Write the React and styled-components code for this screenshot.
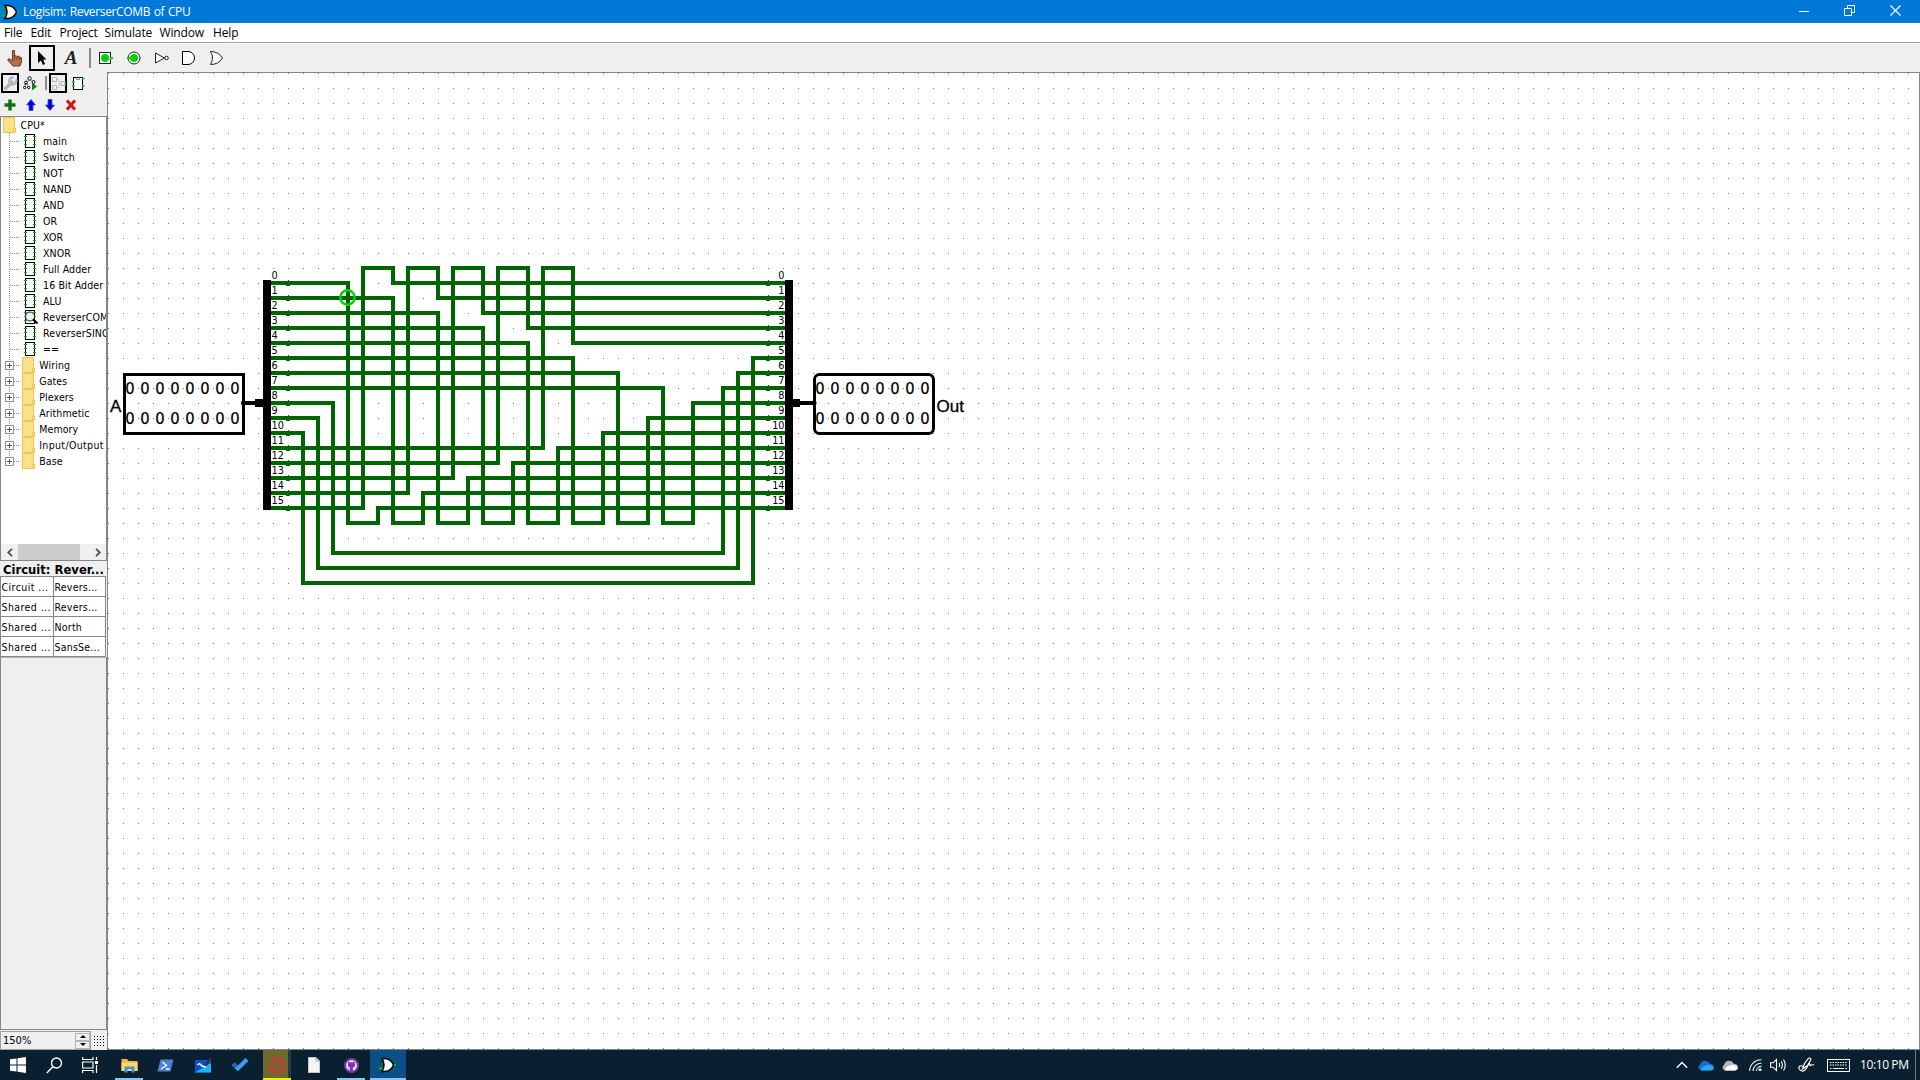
import React from "react";
import styled, { createGlobalStyle } from "styled-components";

const TAHOMA = `"DejaVu Sans Condensed", "DejaVu Sans", sans-serif`;
const SEGOE = `"Open Sans", "Noto Sans", sans-serif`;

const Global = createGlobalStyle`
  * { box-sizing: border-box; }
  html, body { margin: 0; padding: 0; overflow: hidden; }
  svg { display: block; flex: none; }
`;

const Screen = styled.div`
  width: 1920px;
  height: 1080px;
  display: flex;
  flex-direction: column;
  background: #efefef;
  font: 10.5px/16px ${TAHOMA};
  color: #000;
  overflow: hidden;
`;

/* ---------- title and menu ---------- */
const TitleBar = styled.header`
  height: 23px;
  flex: none;
  display: flex;
  align-items: center;
  background: #0078d7;
  color: #fff;
  padding-left: 2px;
  font: 12px/23px ${SEGOE};
`;
const Title = styled.span`
  margin-left: 3px;
  flex: 1;
  letter-spacing: -0.36px;
  word-spacing: 0.9px;
`;
const WindowButtons = styled.div`
  display: flex;
  align-items: center;
  gap: 35px;
  padding: 0 19px 2px 0;
`;
const MenuBar = styled.nav`
  height: 20px;
  flex: none;
  display: flex;
  background: #fff;
  border-bottom: 1px solid #a0a0a0;
  padding-left: 4px;
  font: 12px/20px ${SEGOE};
`;
const MenuItem = styled.span`
  width: ${(p) => p.$w}px;
  letter-spacing: -0.15px;
  white-space: nowrap;
`;
const ToolBar = styled.div`
  height: 29px;
  flex: none;
  display: flex;
  align-items: center;
  border-top: 1px solid #fff;
  padding-left: 1px;
`;
const Tool = styled.div`
  width: ${(p) => p.$w || 28}px;
  height: ${(p) => p.$h || 26}px;
  flex: none;
  display: flex;
  align-items: center;
  justify-content: center;
  border: ${(p) => (p.$on ? "2px solid #000" : "none")};
`;
const Separator = styled.i`
  width: 2px;
  height: ${(p) => p.$h}px;
  background: #8c8c8c;
  margin: 0 ${(p) => p.$r}px 0 ${(p) => p.$l}px;
`;
const TextTool = styled.span`
  font: italic bold 19px/22px "Liberation Serif", serif;
  color: #202020;
`;

/* ---------- body ---------- */
const Body = styled.main`
  height: 978px;
  flex: none;
  display: flex;
`;
const Side = styled.aside`
  width: 107px;
  flex: none;
  display: flex;
  flex-direction: column;
`;
const SideTools = styled.div`
  height: ${(p) => p.$h}px;
  flex: none;
  display: flex;
  align-items: center;
  padding-left: ${(p) => p.$pl}px;
  gap: ${(p) => p.$gap || 0}px;
`;
const TreeBox = styled.div`
  height: 445px;
  flex: none;
  display: flex;
  flex-direction: column;
  background: #fff;
  border: 1px solid #82878f;
  overflow: hidden;
`;
const TreeRows = styled.div`
  flex: 1;
  min-height: 0;
  overflow: hidden;
`;
const TreeRow = styled.div`
  height: 16px;
  display: flex;
  white-space: nowrap;
  padding-left: ${(p) => p.$pl || 0}px;
`;
const RowLabel = styled.span`
  margin-left: ${(p) => p.$ml}px;
  line-height: 17px;
  letter-spacing: ${(p) => p.$ls || 0.12}px;
`;
const ScrollBar = styled.div`
  height: 16px;
  flex: none;
  display: flex;
  align-items: center;
  background: #f0f0f0;
`;
const Thumb = styled.i`
  width: 62px;
  height: 16px;
  margin-right: 9px;
  background: #cdcdcd;
`;
const Arrow = styled.i`
  width: 17px;
  display: flex;
  justify-content: center;
`;
const AttrTitle = styled.div`
  height: 15px;
  flex: none;
  padding-left: 3px;
  font: bold 12.9px/17px ${TAHOMA};
  white-space: nowrap;
`;
const AttrTable = styled.div`
  width: 106px;
  flex: none;
  display: grid;
  grid-template-columns: 52px 51px;
  gap: 1px;
  padding: 1px;
  background: #82878f;
`;
const Cell = styled.span`
  height: 19px;
  line-height: 20px;
  padding-left: 0.5px;
  background: #fff;
  white-space: nowrap;
  letter-spacing: ${(p) => p.$ls}px;
`;
const Filler = styled.div`
  flex: 1;
  border: 1px solid #82878f;
  border-top-color: #b8b8b8;
`;
const ZoomRow = styled.div`
  height: 20px;
  flex: none;
  display: flex;
  align-items: center;
  padding-top: 1px;
`;
const ZoomField = styled.div`
  width: 91px;
  height: 19px;
  display: flex;
  align-items: center;
  justify-content: space-between;
  border: 1px solid #a0a0a0;
  padding-left: 2px;
  font-size: 11px;
`;
const Spinner = styled.div`
  display: flex;
  flex-direction: column;
`;
const SpinButton = styled.i`
  width: 15px;
  height: 8px;
  display: flex;
  align-items: center;
  justify-content: center;
  border: 1px solid #b4b4b4;
  background: #f0f0f0;
`;
const GridToggle = styled.div`
  padding-left: 3px;
`;
const Canvas = styled.section`
  width: 1813px;
  height: 978px;
  border: 1px solid #82878f;
  background: #fff;
`;

/* ---------- taskbar ---------- */
const TaskBar = styled.footer`
  height: 30px;
  flex: none;
  display: flex;
  background: #0a2031;
  color: #fff;
`;
const TaskGroup = styled.div`
  display: flex;
  padding-left: ${(p) => p.$pl || 0}px;
`;
const Task = styled.div`
  width: ${(p) => p.$w}px;
  height: 30px;
  display: flex;
  align-items: center;
  justify-content: center;
  background: ${(p) => p.$bg || "transparent"};
  box-shadow: ${(p) => (p.$line ? `inset 0 -2px ${p.$line}` : "none")};
  margin: 0 ${(p) => p.$m || 0}px;
`;
const Tray = styled.div`
  margin-left: auto;
  display: flex;
  align-items: center;
  padding-right: 4px;
`;
const TraySlot = styled.div`
  width: ${(p) => p.$w}px;
  display: flex;
  justify-content: center;
`;
const Clock = styled.span`
  font: 12px/30px ${SEGOE};
  letter-spacing: -0.4px;
  width: 55px;
  margin-left: 7px;
  white-space: nowrap;
`;
const DesktopEdge = styled.i`
  width: 1px;
  height: 30px;
  background: #6c7984;
`;

/* ---------- icons ---------- */
const GateIcon = ({ dark }) => (
  <svg width="18" height="16" viewBox="0 0 18 16">
    <path d="M0 4.5H4M0 11.5H4" stroke={dark ? "#00b000" : "#005c1c"} strokeWidth="2" />
    <path d="M0 11.5H4M14 8H17" stroke="#00c800" strokeWidth="2" />
    <path d="M3 1.5H6Q12 2 14.5 8Q12 14 6 14.5H3Q7 8 3 1.5Z" fill="#fff" stroke="#000" strokeWidth="1.5" />
  </svg>
);

const HandIcon = () => (
  <svg width="16" height="17" viewBox="0 0 16 17">
    <path d="M5.500 .5H7.500V6.500L9 5.500L10 6.500L12 6L12.500 7.500L14.500 7.500V12L13 16H6L1 10.500V9H3L5.500 11Z" fill="#b5704f" stroke="#5d2f1e" strokeWidth=".9" />
    <path d="M7.500 7V10M10 7V10M12.500 8V10" stroke="#5d2f1e" strokeWidth=".7" />
  </svg>
);
const ArrowIcon = () => (
  <svg width="10" height="16" viewBox="0 0 10 16">
    <path d="M1 1V13L4 10.5L6 15L8 14L6.200 9.500H9.500Z" fill="#000" />
  </svg>
);
const PinIcon = ({ round }) => (
  <svg width="16" height="14" viewBox="0 0 16 14">
    {round ? <circle cx="8" cy="7" r="6" fill="#fff" stroke="#222" /> : <rect x="1.500" y="1.500" width="11" height="11" fill="#fff" stroke="#222" />}
    <circle cx={round ? 8 : 7} cy="7" r="4" fill="#00d200" />
    <rect x={round ? 1 : 12} y="6" width="3" height="2" fill="#00d200" />
  </svg>
);
const NotIcon = () => (
  <svg width="16" height="14" viewBox="0 0 16 14" fill="#fff" stroke="#222">
    <path d="M1.500 2L10.500 7L1.500 12Z" />
    <circle cx="12.500" cy="7" r="1.800" />
  </svg>
);
const AndIcon = () => (
  <svg width="15" height="14" viewBox="0 0 15 14" fill="#fff" stroke="#000">
    <path d="M1.500 .5H7A6.500 6.500 0 0 1 7 13.500H1.500Z" />
  </svg>
);
const OrIcon = () => (
  <svg width="15" height="14" viewBox="0 0 15 14" fill="#fff" stroke="#222">
    <path d="M1.500 .5Q9.500 .5 13.500 7Q9.500 13.500 1.500 13.500Q5.500 7 1.500 .5Z" />
  </svg>
);
const WrenchIcon = () => (
  <svg width="15" height="15" viewBox="0 0 15 15">
    <path d="M2.500 12.500L9 6" stroke="#b4b4b4" strokeWidth="3.500" strokeLinecap="round" />
    <path d="M13 3.500A3.500 3.500 0 1 1 10.500 1.500" fill="none" stroke="#b4b4b4" strokeWidth="2.500" />
  </svg>
);
const SimIcon = () => (
  <svg width="15" height="15" viewBox="0 0 15 15" fill="#fff" stroke="#000">
    <path d="M6.500 3L2.500 7L1.500 12M6.500 3L10.500 6.500M3.500 7L5.500 12" strokeDasharray="2 1" />
    <circle cx="6.500" cy="2.500" r="1.700" />
    <circle cx="3" cy="6.500" r="1.400" />
    <circle cx="1.700" cy="11.500" r="1.200" />
    <circle cx="5.700" cy="11.500" r="1.200" />
    <circle cx="10.500" cy="6" r="1.500" />
    <path d="M9 6.500V14.500L14 10.500Z" fill="#107c20" stroke="none" />
  </svg>
);
const LayoutIcon = () => (
  <svg width="15" height="15" viewBox="0 0 15 15" fill="none" stroke="#b8b8b8">
    <path d="M5 3.500H8V7.500H10M5 11.500H8V7.500" stroke="#a9dca9" />
    <rect x="1.500" y="1.500" width="4" height="4" />
    <rect x="1.500" y="9.500" width="4" height="4" />
    <rect x="10" y="5.500" width="4" height="4" />
  </svg>
);
const ChipIcon = () => (
  <svg width="13" height="15" viewBox="0 0 13 15">
    <rect x="1.500" y="1.500" width="9" height="12" fill="#fff" stroke="#000" />
    <path d="M4.500 1.500V3.500H7.500V1.500" fill="none" stroke="#888" />
    <path d="M0 6H2.500M10 2.500H12.500M10 10H12.500M0 10H2.500" stroke="#00c800" strokeWidth="1.600" />
  </svg>
);
const PlusIcon = () => (
  <svg width="12" height="12" viewBox="0 0 12 12"><path d="M6 .5V11.500M.5 6H11.500" stroke="#107010" strokeWidth="3.400" /></svg>
);
const MoveIcon = ({ down }) => (
  <svg width="10" height="12" viewBox="0 0 10 12">
    <path d={down ? "M3 .5H7V6H9.500L5 11.500L.5 6H3Z" : "M3 11.500H7V6H9.500L5 .5L.5 6H3Z"} fill="#0000e0" stroke="#4a4ab8" strokeWidth=".8" />
  </svg>
);
const DeleteIcon = () => (
  <svg width="12" height="12" viewBox="0 0 12 12"><path d="M2 1.500L10 10.500M10 1.500L2 10.500" stroke="#d81010" strokeWidth="3" /></svg>
);

const Folder = () => (
  <svg width="13" height="16" viewBox="0 0 13 16">
    <path d="M.5 .5H11.500V11H12.500V15.500H.5Z" fill="#ffe08a" stroke="#ecc64e" />
    <path d="M10.500 15V11.500H12.500" fill="none" stroke="#ecc64e" />
  </svg>
);
const Branch = ({ kind, last }) => (
  <svg width={kind === "lib" ? 21 : 23} height="16" viewBox={`0 0 ${kind === "lib" ? 21 : 23} 16`} shapeRendering="crispEdges">
    <path d={`M8.500 0V${last ? 8 : 16}M9 8.500H19`} stroke="#8a8a8a" strokeDasharray="1 1" />
    {kind === "lib" && (
      <g>
        <rect x="4.500" y="4.500" width="8" height="8" fill="#fff" stroke="#919191" />
        <path d="M6 8.500H11M8.500 6V11" stroke="#3a55a0" />
      </g>
    )}
  </svg>
);
const CircuitIcon = ({ viewed }) => (
  <svg width="15" height="16" viewBox="0 0 15 16" shapeRendering="crispEdges">
    <rect x="1.500" y="1.500" width="9" height="13" fill="#fff" stroke="#000" />
    <path d="M0 3.500H3M0 7.500H3M0 11.500H3M9 3.500H12M9 7.500H12M9 11.500H12" stroke="#00b400" />
    {viewed && (
      <g shapeRendering="auto">
        <circle cx="6" cy="7.500" r="4.500" fill="#eef2ff" stroke="#222" />
        <path d="M9 10.500L13.500 14.500" stroke="#000" strokeWidth="2.200" />
      </g>
    )}
  </svg>
);
const ScrollChevron = ({ right }) => (
  <svg width="6" height="9">
    <path d={right ? "M1 .8L4.800 4.500L1 8.200" : "M5 .8L1.200 4.500L5 8.200"} fill="none" stroke="#505050" strokeWidth="1.800" />
  </svg>
);

/* ---------- circuit ---------- */
const pinY = (k) => 283 + 15 * k;
const rows = Array.from({ length: 16 }, (_, k) => k);
const wires = [];
for (let k = 0; k < 16; k++) {
  const out = 15 - k;
  let a, turn, b;
  if (k < 8) {
    a = 348 + 45 * k; turn = 523; b = a + 30;
  } else if (k < 11) {
    a = 333 - 15 * (k - 8); turn = 553 + 15 * (k - 8); b = 723 + 15 * (k - 8);
  } else {
    a = 543 - 45 * (k - 11); turn = 268; b = a + 30;
  }
  wires.push(`M271 ${pinY(k)}H${a}V${turn}H${b}V${pinY(out)}H785`);
}

const PinNumber = styled.text`
  font: 10.8px ${TAHOMA};
  text-anchor: ${(p) => p.$anchor};
`;
const BitText = styled.text`
  font: 16.4px ${TAHOMA};
  text-anchor: middle;
  stroke: #000;
  stroke-width: 0.25px;
`;
const PinLabel = styled.text`
  font: 17px "Liberation Sans", Arial, sans-serif;
  stroke: #000;
  stroke-width: 0.3px;
`;

const Bits = ({ x }) =>
  [394, 424].map((y) =>
    rows.slice(0, 8).map((i) => <BitText key={`${y}-${i}`} x={x + 15 * i} y={y}>0</BitText>)
  );

const Circuit = () => (
  <svg width="1811" height="976" viewBox="108 73 1811 976">
    <defs>
      <pattern id="dots" x="3" y="13" width="15" height="15" patternUnits="userSpaceOnUse">
        <rect width="1" height="1" fill="#777" />
      </pattern>
    </defs>
    <rect x="108" y="73" width="1811" height="976" fill="url(#dots)" />
    <g shapeRendering="crispEdges">
      <path d={wires.join("")} fill="none" stroke="#006400" strokeWidth="4" />
      {rows.map((k) => (
        <g key={k} fill="#006400">
          <rect x="288" y={pinY(k) - 3} width="1" height="1" />
          <rect x="286" y={pinY(k) + 2} width="4" height="1" />
          <rect x="768" y={pinY(k) - 3} width="1" height="1" />
          <rect x="766" y={pinY(k) + 2} width="4" height="1" />
        </g>
      ))}
      <path d="M263 280H271V510H263ZM785 280H793V510H785ZM255 399H263V407H255ZM793 399H800V407H793ZM243 401H255V405H243ZM800 401H814V405H800Z" />
      <rect x="124.500" y="374.500" width="119" height="59" fill="none" stroke="#000" strokeWidth="3" />
    </g>
    <circle cx="243.500" cy="403" r="2.500" />
    <circle cx="814" cy="403" r="2.500" />
    <rect x="814.500" y="374.500" width="119" height="59" rx="5" fill="none" stroke="#000" strokeWidth="3" />
    <circle cx="347.500" cy="297.500" r="7.200" fill="none" stroke="#00d200" strokeWidth="2.400" />
    {rows.map((k) => (
      <g key={k}>
        <PinNumber x="271.500" y={pinY(k) - 4} $anchor="start">{k}</PinNumber>
        <PinNumber x="784.500" y={pinY(k) - 4} $anchor="end">{k}</PinNumber>
      </g>
    ))}
    <Bits x={130} />
    <Bits x={820} />
    <PinLabel x="110" y="412">A</PinLabel>
    <PinLabel x="936.500" y="412">Out</PinLabel>
  </svg>
);

const circuits = ["main", "Switch", "NOT", "NAND", "AND", "OR", "XOR", "XNOR", "Full Adder", "16 Bit Adder", "ALU", "ReverserCOMB", "ReverserSING", "=="];
const libs = ["Wiring", "Gates", "Plexers", "Arithmetic", "Memory", "Input/Output", "Base"];
const attrs = ["Circuit ...", "Revers...", "Shared ...", "Revers...", "Shared ...", "North", "Shared ...", "SansSe..."];

export default function App() {
  return (
    <>
      <Global />
      <Screen>
        <TitleBar>
          <GateIcon dark />
          <Title>Logisim: ReverserCOMB of CPU</Title>
          <WindowButtons>
            <svg width="10" height="11"><path d="M0 6.500H10" stroke="#fff" /></svg>
            <svg width="11" height="11" fill="none" stroke="#fff"><path d="M.5 3.500H7.500V10.500H.5ZM3.500 3.500V.5H10.500V7.500H7.500" /></svg>
            <svg width="11" height="11"><path d="M.5 .5L10.500 10.500M10.500 .5L.5 10.500" stroke="#fff" strokeWidth="1.200" /></svg>
          </WindowButtons>
        </TitleBar>
        <MenuBar>
          <MenuItem $w={26.500}>File</MenuItem>
          <MenuItem $w={29}>Edit</MenuItem>
          <MenuItem $w={45}>Project</MenuItem>
          <MenuItem $w={55}>Simulate</MenuItem>
          <MenuItem $w={53.500}>Window</MenuItem>
          <MenuItem $w={30}>Help</MenuItem>
        </MenuBar>
        <ToolBar>
          <Tool $w={28}><HandIcon /></Tool>
          <Tool $on $w={26}><ArrowIcon /></Tool>
          <Tool $w={32}><TextTool>A</TextTool></Tool>
          <Separator $h={20} $l={2} $r={1} />
          <Tool><PinIcon /></Tool>
          <Tool><PinIcon round /></Tool>
          <Tool $w={28}><NotIcon /></Tool>
          <Tool $w={25}><AndIcon /></Tool>
          <Tool $w={30}><OrIcon /></Tool>
        </ToolBar>
        <Body>
          <Side>
            <SideTools $h={22} $pl={1}>
              <Tool $on $w={18} $h={20}><WrenchIcon /></Tool>
              <Tool $w={22} $h={20}><SimIcon /></Tool>
              <Separator $h={14} $l={4} $r={2} />
              <Tool $on $w={18} $h={20}><LayoutIcon /></Tool>
              <Tool $w={22} $h={20}><ChipIcon /></Tool>
            </SideTools>
            <SideTools $h={22} $pl={4} $gap={9.500}>
              <PlusIcon /><MoveIcon /><MoveIcon down /><DeleteIcon />
            </SideTools>
            <TreeBox>
              <TreeRows>
                <TreeRow $pl={2}><Folder /><RowLabel $ml={4.500}>CPU*</RowLabel></TreeRow>
                {circuits.map((name) => (
                  <TreeRow key={name}>
                    <Branch />
                    <CircuitIcon viewed={name === "ReverserCOMB"} />
                    <RowLabel $ml={4}>{name}</RowLabel>
                  </TreeRow>
                ))}
                {libs.map((name) => (
                  <TreeRow key={name}>
                    <Branch kind="lib" last={name === "Base"} />
                    <Folder />
                    <RowLabel $ml={4.200} $ls={name.includes("/") ? 0.35 : 0}>{name}</RowLabel>
                  </TreeRow>
                ))}
              </TreeRows>
              <ScrollBar>
                <Arrow><ScrollChevron /></Arrow>
                <Thumb />
                <Arrow><ScrollChevron right /></Arrow>
              </ScrollBar>
            </TreeBox>
            <AttrTitle>Circuit: Rever...</AttrTitle>
            <AttrTable>
              {attrs.map((t, i) => <Cell key={i} $ls={i % 2 ? 0.22 : 0.42}>{t}</Cell>)}
            </AttrTable>
            <Filler />
            <ZoomRow>
              <ZoomField>
                150%
                <Spinner>
                  <SpinButton><svg width="6" height="3"><path d="M0 3L3 0L6 3Z" /></svg></SpinButton>
                  <SpinButton><svg width="6" height="3"><path d="M0 0L3 3L6 0Z" /></svg></SpinButton>
                </Spinner>
              </ZoomField>
              <GridToggle>
                <svg width="12" height="12" shapeRendering="crispEdges">
                  {[0, 1, 2, 3].map((r) => [0, 1, 2, 3].map((c) => <rect key={`${r}${c}`} x={c * 3} y={r * 3 + 1} width="1" height="1" />))}
                </svg>
              </GridToggle>
            </ZoomRow>
          </Side>
          <Canvas><Circuit /></Canvas>
        </Body>
        <TaskBar>
          <TaskGroup>
            <Task $w={36}><svg width="16" height="16" fill="#fff"><path d="M0 2.300L6.500 1.400V7.500H0ZM7.500 1.200L16 0V7.500H7.500ZM0 8.500H6.500V14.600L0 13.700ZM7.500 8.500H16V16L7.500 14.800Z" /></svg></Task>
            <Task $w={36}><svg width="17" height="17" fill="none" stroke="#fff" strokeWidth="1.400"><circle cx="10.500" cy="6" r="5" /><path d="M7 9.700L.8 16" /></svg></Task>
            <Task $w={36}><svg width="17" height="16" fill="none" stroke="#fff" strokeWidth="1.200"><path d="M.6 0V2.500H11V0M.6 16V13.500H11V16M.6 5H11V11H.6ZM14.500 0V3M14.500 8V16" /><path d="M13 5.500H16" strokeWidth="3" /></svg></Task>
          </TaskGroup>
          <TaskGroup $pl={3}>
            <Task $w={28} $m={4} $line="#8cc4ec">
              <svg width="17" height="15"><path d="M.5 1H6L7.500 3H16.500V13H.5Z" fill="#f5b83d" /><path d="M.5 4.500H16.500V13H.5Z" fill="#ffd76e" /><path d="M3.500 14.500V8.500H13.500V14.500H10.500V11H6.500V14.500Z" fill="#3c92d6" /></svg>
            </Task>
            <Task $w={37}>
              <svg width="17" height="13"><path d="M3.500 .5H16.500L13.500 12.500H.5Z" fill="#4a7fd6" /><path d="M5.500 3L9.500 6.500L4 10M9 10H12.500" fill="none" stroke="#fff" strokeWidth="1.400" /></svg>
            </Task>
            <Task $w={38}>
              <svg width="17" height="15"><rect y="2" width="16" height="12.500" fill="#0b4fd8" /><path d="M0 14.500L16 5V14.500Z" fill="#18b4f4" /><path d="M2.500 7Q4.500 4.500 6 7T11 8.500" fill="none" stroke="#fff" strokeWidth="1.500" /><path d="M10.500 7.500L15.500 .5" stroke="#333" strokeWidth="2.200" /></svg>
            </Task>
            <Task $w={36}>
              <svg width="17" height="14"><path d="M1 5.500L6.500 11" stroke="#2264b8" strokeWidth="4.500" /><path d="M4.500 11.800L15 1.500" stroke="#3f9bec" strokeWidth="4.200" /></svg>
            </Task>
            <Task $w={28} $m={5} $bg="linear-gradient(90deg, #6b6b2c 25px, #243b48 25px)" $line="#ffee00">
              <svg width="17" height="17" fill="none" stroke="#d8303c" strokeWidth="1.500"><circle cx="8.500" cy="8.500" r="7.500" /><ellipse cx="8.500" cy="8.500" rx="3.500" ry="6.500" /></svg>
            </Task>
            <Task $w={36}>
              <svg width="12" height="16"><path d="M.5 .5H8L11.500 4V15.500H.5Z" fill="#f4f4f0" stroke="#c8c8c8" /><path d="M8 .5V4H11.500" fill="none" stroke="#aaa" /></svg>
            </Task>
            <Task $w={28} $m={5} $line="#8cc4ec">
              <svg width="15" height="15"><circle cx="7.500" cy="7.500" r="7.500" fill="#7a35a8" /><circle cx="7.500" cy="7.500" r="5.400" fill="#f0e4f8" /><path d="M4.500 3.500L6 4.300H9L10.500 3.500L10.900 5.200Q11.800 9 8.900 9.500V13.500H6.100V11.500Q4.500 12 3.800 10.200Q5 11 6.100 10.400V9.500Q3.200 9 4.100 5.200Z" fill="#7a35a8" /></svg>
            </Task>
            <Task $w={36} $bg="#0a4f87" $line="#8cc4ec"><GateIcon /></Task>
          </TaskGroup>
          <Tray>
            <TraySlot $w={26}><svg width="12" height="8"><path d="M.8 6.800L6 1.500L11.200 6.800" fill="none" stroke="#fff" strokeWidth="1.300" /></svg></TraySlot>
            <TraySlot $w={22}><svg width="16" height="11"><path d="M3 10.500A3 3 0 0 1 2 5Q3 1 7 .8Q10 .5 12 4A3.200 3.200 0 0 1 13 10.500Z" fill="#0f72cc" /><path d="M3 10.500Q3 6.500 8 5.500Q12 3.500 15.500 7Q16 10 13 10.500Z" fill="#2ea6ee" /></svg></TraySlot>
            <TraySlot $w={26}><svg width="16" height="11"><path d="M3 10.500A3 3 0 0 1 2 5Q3 1 7 .8Q10 .5 12 4A3.200 3.200 0 0 1 13 10.500Z" fill="#b4b8bc" /><path d="M3 10.500Q3 6.500 8 5.500Q12 3.500 15.500 7Q16 10 13 10.500Z" fill="#fff" /></svg></TraySlot>
            <TraySlot $w={24}><svg width="13" height="12" fill="none" stroke="#e8ecef" strokeWidth="1.100"><path d="M.6 12A11.400 11.400 0 0 1 12.500 .8M4 12A8 8 0 0 1 12.500 4.200M7.300 12A5 5 0 0 1 12.500 7.400" /><circle cx="11" cy="10.800" r="1" fill="#fff" /></svg></TraySlot>
            <TraySlot $w={22}><svg width="17" height="14" fill="none" stroke="#fff" strokeWidth="1.100"><path d="M.6 4.800H3L6.500 1.500V12.500L3 9.200H.6ZM9 5Q10.200 7 9 9M11.200 3.200Q13.500 7 11.200 10.800M13.500 1.500Q17 7 13.500 12.500" /></svg></TraySlot>
            <TraySlot $w={34}><svg width="17" height="16" fill="none" stroke="#fff" strokeWidth="1.200"><path d="M4.500 12L6.500 6.500L10.500 1.200Q12.500 .5 13 2.500L9.500 8.500ZM5 9H2Q0 10.500 1.500 12.500Q3.500 15 6.500 13.500Q9 11 10 8Q12.500 5.500 12 8.500L16 7.500" /></svg></TraySlot>
            <TraySlot $w={30}><svg width="23" height="13" fill="none" stroke="#fff"><rect x=".5" y=".5" width="22" height="12" /><path d="M3 3.500H20M3 6H20" strokeDasharray="1.500 1" /><path d="M3 9.500H4.500M6 9.500H17M18.500 9.500H20" /></svg></TraySlot>
            <Clock>10:10 PM</Clock>
            <DesktopEdge />
          </Tray>
        </TaskBar>
      </Screen>
    </>
  );
}
